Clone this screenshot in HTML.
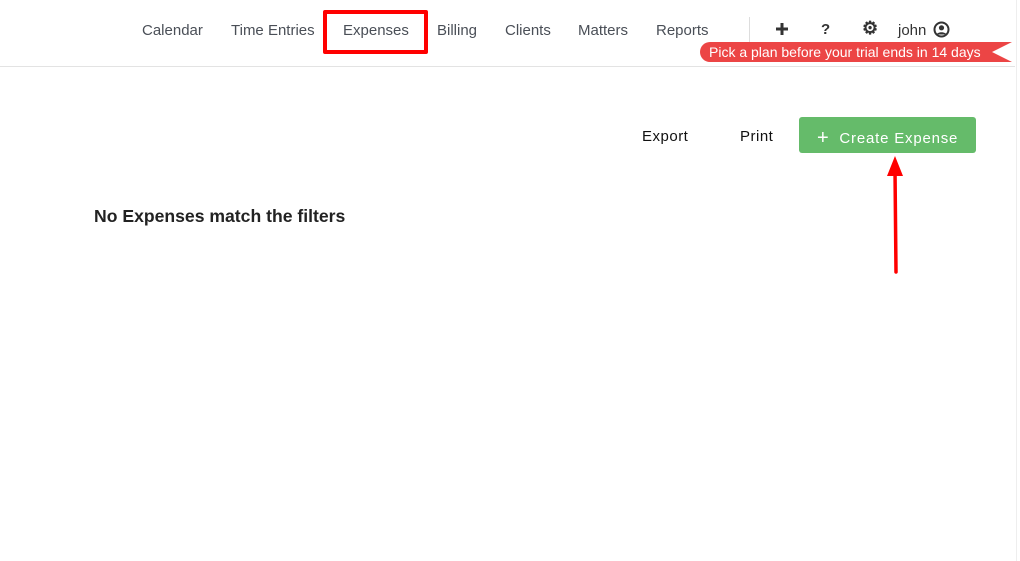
<!DOCTYPE html>
<html><head><meta charset="utf-8"><style>
body{margin:0;width:1020px;height:561px;background:#fff;font-family:"Liberation Sans",sans-serif;position:relative;overflow:hidden}
.a{position:absolute;white-space:nowrap}
.nav{top:22px;font-size:15px;color:#4a4f57}
</style></head><body>
<div class="a" style="left:0;top:66px;width:1015px;height:1px;background:#e3e3e3"></div>
<div class="a" style="left:1016px;top:0;width:1px;height:561px;background:#eee"></div>
<div class="a nav" style="left:142px">Calendar</div>
<div class="a nav" style="left:231px">Time Entries</div>
<div class="a nav" style="left:343px">Expenses</div>
<div class="a nav" style="left:437px">Billing</div>
<div class="a nav" style="left:505px">Clients</div>
<div class="a nav" style="left:578px">Matters</div>
<div class="a nav" style="left:656px">Reports</div>
<div class="a" style="left:323px;top:10px;width:97px;height:36px;border:4px solid #f00;border-radius:2px"></div>
<div class="a" style="left:749px;top:17px;width:1px;height:26px;background:#ddd"></div>
<svg class="a" style="left:775px;top:22px" width="14" height="14"><path d="M7 1V13M1 7H13" stroke="#333" stroke-width="3"/></svg>
<div class="a" style="left:821px;top:21px;font-size:15px;font-weight:bold;color:#333">?</div>
<div class="a" style="left:862px;top:18px;font-size:18px;font-weight:bold;color:#333">⚙</div>
<div class="a nav" style="left:898px;color:#333">john</div>
<svg class="a" style="left:933px;top:21px" width="17" height="17" viewBox="0 0 17 17"><circle cx="8.5" cy="8.5" r="7" fill="none" stroke="#333" stroke-width="2"/><circle cx="8.5" cy="6.8" r="2.6" fill="#333"/><path d="M3.5 13.5C5 10.5 12 10.5 13.5 13.5" fill="#333"/></svg>
<svg class="a" style="left:700px;top:42px" width="312" height="20"><path d="M10 0H312L292 10L312 20H10A10 10 0 0 1 10 0Z" fill="#ec4545"/></svg>
<div class="a" style="left:709px;top:44px;font-size:14px;color:#fff">Pick a plan before your trial ends in 14 days</div>
<div class="a" style="left:642px;top:128px;font-size:15px;color:#111;letter-spacing:.5px">Export</div>
<div class="a" style="left:740px;top:128px;font-size:15px;color:#111;letter-spacing:.5px">Print</div>
<div class="a" style="left:799px;top:117px;width:177px;height:36px;background:#65bb6a;border-radius:3px"></div>
<div class="a" style="left:817px;top:126px;font-size:15px;color:#fff;letter-spacing:.8px"><span style="font-size:20px;position:relative;top:1px">+</span>&nbsp; Create Expense</div>
<svg class="a" style="left:885px;top:155px" width="20" height="120"><path d="M10 15L11 117" stroke="#f00" stroke-width="3.5" stroke-linecap="round"/><path d="M2 21L10 1L18 21Z" fill="#f00"/></svg>
<div class="a" style="left:94px;top:206px;font-size:17.6px;font-weight:bold;color:#222">No Expenses match the filters</div>
</body></html>
